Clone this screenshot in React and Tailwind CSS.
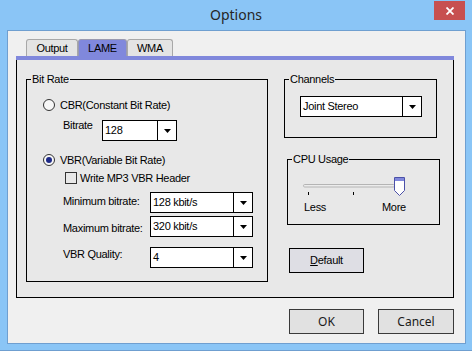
import React from 'react';

/* Options dialog – LAME tab */

const PANEL_BG = 'bg-[#e8e8e8]';

function Combo({ value, className }) {
  return (
    <div className={`flex h-[21px] border border-black bg-white ${className}`}>
      <span className="flex-1 pl-[2px] leading-[19px] whitespace-nowrap overflow-hidden">{value}</span>
      <span className="w-[19px] border-l border-black flex items-center justify-center">
        <svg width="7" height="4" viewBox="0 0 7 4">
          <path d="M0 0h7L3.5 4z" fill="#000" />
        </svg>
      </span>
    </div>
  );
}

function Radio({ checked }) {
  return (
    <span className="w-[12px] h-[12px] shrink-0 rounded-full border border-[#333] bg-[#f7f7f7] flex items-center justify-center">
      {checked && <span className="w-[6px] h-[6px] rounded-full bg-[#1e2a88]" />}
    </span>
  );
}

function GroupLabel({ children }) {
  return (
    <span className={`-mt-[7px] ml-[4px] px-[1px] w-fit leading-[13px] ${PANEL_BG}`}>{children}</span>
  );
}

function Tab({ label, active, className }) {
  return (
    <div
      className={[
        'h-[17px] flex items-center justify-center border border-b-0 rounded-t-[3px]',
        active ? 'bg-[#8088dc] border-[#9a9ab0]' : 'bg-[#e4e4e4] border-[#a8a8a8]',
        className,
      ].join(' ')}
    >
      {label}
    </div>
  );
}

function Slider() {
  return (
    <svg width="112" height="24" viewBox="0 0 112 24" className="block">
      <rect x="5.5" y="10.5" width="91" height="2.5" rx="1.2" fill="#ececec" stroke="#b4b4b4" />
      <line x1="10.5" y1="18" x2="10.5" y2="21" stroke="#000" />
      <line x1="55.5" y1="18" x2="55.5" y2="21" stroke="#000" />
      <path d="M96.5 3.5h10v13l-5 5l-5-5z" fill="#fff" stroke="#4b50a8" />
      <rect x="97" y="4" width="9" height="3" fill="#8088dc" />
    </svg>
  );
}

export default function App() {
  return (
    <div className="w-[472px] h-[351px] bg-[#8ac5f6] border-b border-[#6f9fd0] flex flex-col font-['Liberation_Sans',Arial,sans-serif] text-[11px] leading-[13px] tracking-[-0.3px] text-black">
      {/* Title bar */}
      <div className="h-[30px] shrink-0 flex items-start">
        <div className="w-[38px]" />
        <div className="flex-1 text-center pt-[5px] text-[14px] leading-[19px] tracking-normal font-['Noto_Sans',sans-serif] text-[#262626]">
          Options
        </div>
        <div className="w-[31px] h-[19px] mt-[1px] mr-[7px] bg-[#c75050] flex items-center justify-center">
          <svg width="8" height="8" viewBox="0 0 8 8">
            <path d="M0.5 0.5l7 7M7.5 0.5l-7 7" stroke="#fff" strokeWidth="1.8" />
          </svg>
        </div>
      </div>

      {/* Client area */}
      <div className="ml-[7px] w-[459px] h-[314px] shrink-0 border border-[#6f9fd0] bg-[#f0f0f0] flex flex-col">
        {/* Tabs */}
        <div className="mt-[8px] ml-[18px] flex">
          <Tab label="Output" className="w-[52px]" />
          <Tab label="LAME" active className="w-[49px]" />
          <Tab label="WMA" className="w-[46px]" />
        </div>

        {/* Tab panel */}
        <div className="ml-[8px] w-[438px] flex flex-col">
          <div className="h-[4px] bg-[#8088dc]" />
          <div className={`h-[238px] border-x border-b border-black flex ${PANEL_BG}`}>
            {/* Bit Rate */}
            <div className="ml-[9px] mt-[19px] w-[242px] h-[203px] border border-black flex flex-col">
              <GroupLabel>Bit Rate</GroupLabel>

              <div className="mt-[12px] ml-[16px] h-[14px] flex items-center gap-[5px]">
                <Radio />
                <span>CBR(Constant Bit Rate)</span>
              </div>

              <div className="mt-[8px] ml-[36px] flex items-start">
                <span className="w-[39px] -mt-[1px]">Bitrate</span>
                <Combo value="128" className="w-[75px]" />
              </div>

              <div className="mt-[12px] ml-[16px] h-[14px] flex items-center gap-[5px]">
                <Radio checked />
                <span>VBR(Variable Bit Rate)</span>
              </div>

              <div className="mt-[5px] ml-[38px] h-[12px] flex items-center gap-[3px]">
                <span className="w-[12px] h-[12px] border border-[#333]" />
                <span>Write MP3 VBR Header</span>
              </div>

              <div className="mt-[8px] ml-[36px] flex items-start">
                <span className="w-[87px] mt-[3px]">Minimum bitrate:</span>
                <Combo value="128 kbit/s" className="w-[103px]" />
              </div>

              <div className="mt-[3px] ml-[36px] flex items-start">
                <span className="w-[87px] mt-[6px]">Maximum bitrate:</span>
                <Combo value="320 kbit/s" className="w-[103px]" />
              </div>

              <div className="mt-[10px] ml-[36px] flex items-start">
                <span className="w-[87px] mt-[1px]">VBR Quality:</span>
                <Combo value="4" className="w-[103px]" />
              </div>
            </div>

            {/* Right column */}
            <div className="ml-[16px] mt-[19px] w-[158px] flex flex-col">
              <div className="w-[153px] h-[59px] border border-black flex flex-col">
                <GroupLabel>Channels</GroupLabel>
                <Combo value="Joint Stereo" className="mt-[10px] ml-[15px] w-[122px]" />
              </div>

              <div className="ml-[3px] mt-[21px] w-[153px] h-[66px] border border-black flex flex-col">
                <GroupLabel>CPU Usage</GroupLabel>
                <div className="mt-[8px] ml-[10px]">
                  <Slider />
                </div>
                <div className="mt-[3px] ml-[16px] flex">
                  <span className="w-[78px]">Less</span>
                  <span>More</span>
                </div>
              </div>

              <button className="ml-[5px] mt-[23px] w-[75px] h-[25px] border border-black bg-[#dedee4] text-center">
                <span className="underline">D</span>efault
              </button>
            </div>
          </div>
        </div>

        {/* Dialog buttons */}
        <div className="mt-[11px] ml-[281px] flex gap-[14px] font-['Noto_Sans',sans-serif] text-[12px] tracking-normal text-[#1a1a1a]">
          <button className="w-[75px] h-[25px] border border-[#3a3a3a] bg-[#e1e1e1]">OK</button>
          <button className="w-[76px] h-[25px] border border-[#3a3a3a] bg-[#e1e1e1]">Cancel</button>
        </div>
      </div>
    </div>
  );
}
